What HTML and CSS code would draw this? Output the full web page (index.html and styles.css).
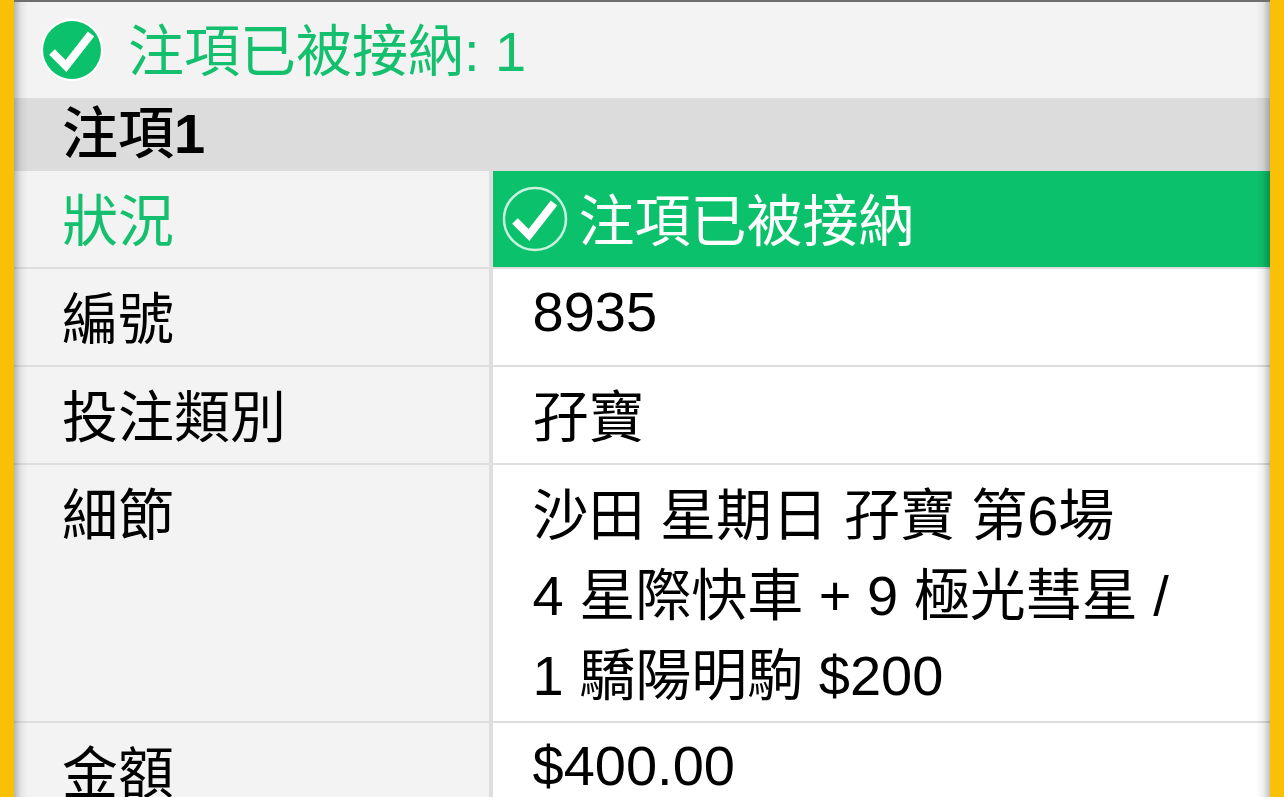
FILE: index.html
```html
<!DOCTYPE html>
<html lang="zh-Hant">
  <head>
    <meta charset="UTF-8" />
    <meta name="viewport" content="width=device-width, initial-scale=1.0" />
    <title>注項已被接納</title>
    <link rel="stylesheet" href="styles.css">
  </head>
  <body>
    <main class="slip">
      <!-- Summary -->
      <div class="summary">
        <svg class="summary-icon" viewBox="0 0 64 64" aria-hidden="true">
          <circle cx="32" cy="32" r="31" fill="#fff" />
          <circle cx="32" cy="32" r="29" fill="#0cc16c" />
          <path d="M12 34 L26 48 L51 16" fill="none" stroke="#fff" stroke-width="8" />
        </svg>
        <span>注項已被接納: 1</span>
      </div>

      <h1 class="bet-title">注項<b>1</b></h1>

      <!-- Bet details -->
      <table class="bet">
        <tr class="status">
          <th scope="row">狀況</th>
          <td>
            <div class="status-value">
              <svg class="status-icon" viewBox="0 0 64 64" aria-hidden="true">
                <circle cx="32" cy="32" r="31" fill="none" stroke="#c9f3de" stroke-width="2.5" />
                <path d="M12 34 L26 48 L51 16" fill="none" stroke="#fff" stroke-width="8" />
              </svg>
              <span>注項已被接納</span>
            </div>
          </td>
        </tr>
        <tr>
          <th scope="row">編號</th>
          <td class="number">8935</td>
        </tr>
        <tr>
          <th scope="row">投注類別</th>
          <td>孖寶</td>
        </tr>
        <tr>
          <th scope="row">細節</th>
          <td>沙田 星期日 孖寶 第6場<br />4 星際快車 + 9 極光彗星 /<br />1 驕陽明駒 $200</td>
        </tr>
        <tr>
          <th scope="row">金額</th>
          <td class="number">$400.00</td>
        </tr>
      </table>
    </main>
  </body>
</html>
```

FILE: styles.css
```css
* {
  box-sizing: border-box;
}

body {
  margin: 0;
  height: 100vh;
  overflow: hidden;
  background: #f9c006;
  color: #000;
  font-family: "Liberation Sans", "Noto Sans CJK TC", sans-serif;
  font-size: 56px;
  line-height: 80px;
}

.slip {
  position: relative;
  min-height: 100vh;
  margin: 0 14px;
  background: #f3f3f3;
  border-top: 2px solid #6f6f6f;
}

/* shadow cast inwards by the yellow frame */
.slip::before,
.slip::after {
  content: "";
  position: absolute;
  top: 0;
  bottom: 0;
  width: 14px;
  pointer-events: none;
}

.slip::before {
  left: 0;
  background: linear-gradient(to right, rgba(0, 0, 0, 0.25), rgba(0, 0, 0, 0.06) 50%, transparent);
}

.slip::after {
  right: 0;
  background: linear-gradient(to left, rgba(0, 0, 0, 0.25), rgba(0, 0, 0, 0.06) 50%, transparent);
}

.summary {
  display: flex;
  align-items: center;
  gap: 24px;
  padding: 10px 26px 6px;
  color: #14c06e;
}

.summary-icon {
  width: 64px;
  height: 64px;
  margin-bottom: 4px;
}

.bet-title {
  margin: 0;
  padding: 0 48px 2px;
  background: #dcdcdc;
  font-size: 56px;
  font-weight: 500;
  line-height: 71px;
}

.bet-title b {
  font-weight: bold;
}

.bet {
  width: 100%;
  table-layout: fixed;
  border-collapse: separate;
  border-spacing: 0;
}

.bet th,
.bet td {
  padding: 11px 40px 5px;
  border-bottom: 2px solid #dedede;
  text-align: left;
  vertical-align: top;
  font-weight: normal;
}

.bet th {
  width: 38.1%;
  padding-left: 48px;
  border-right: 4px solid #dedede;
}

.bet td {
  background: #fff;
}

.bet .number {
  line-height: 64px;
}

.bet .status th {
  color: #14c06e;
}

.bet .status td {
  padding-left: 10px;
  background: #0cc16c;
  color: #fff;
}

.status-value {
  display: flex;
  align-items: center;
  gap: 12px;
}

.status-icon {
  width: 64px;
  height: 64px;
  margin-bottom: 6px;
  overflow: visible;
}
```
